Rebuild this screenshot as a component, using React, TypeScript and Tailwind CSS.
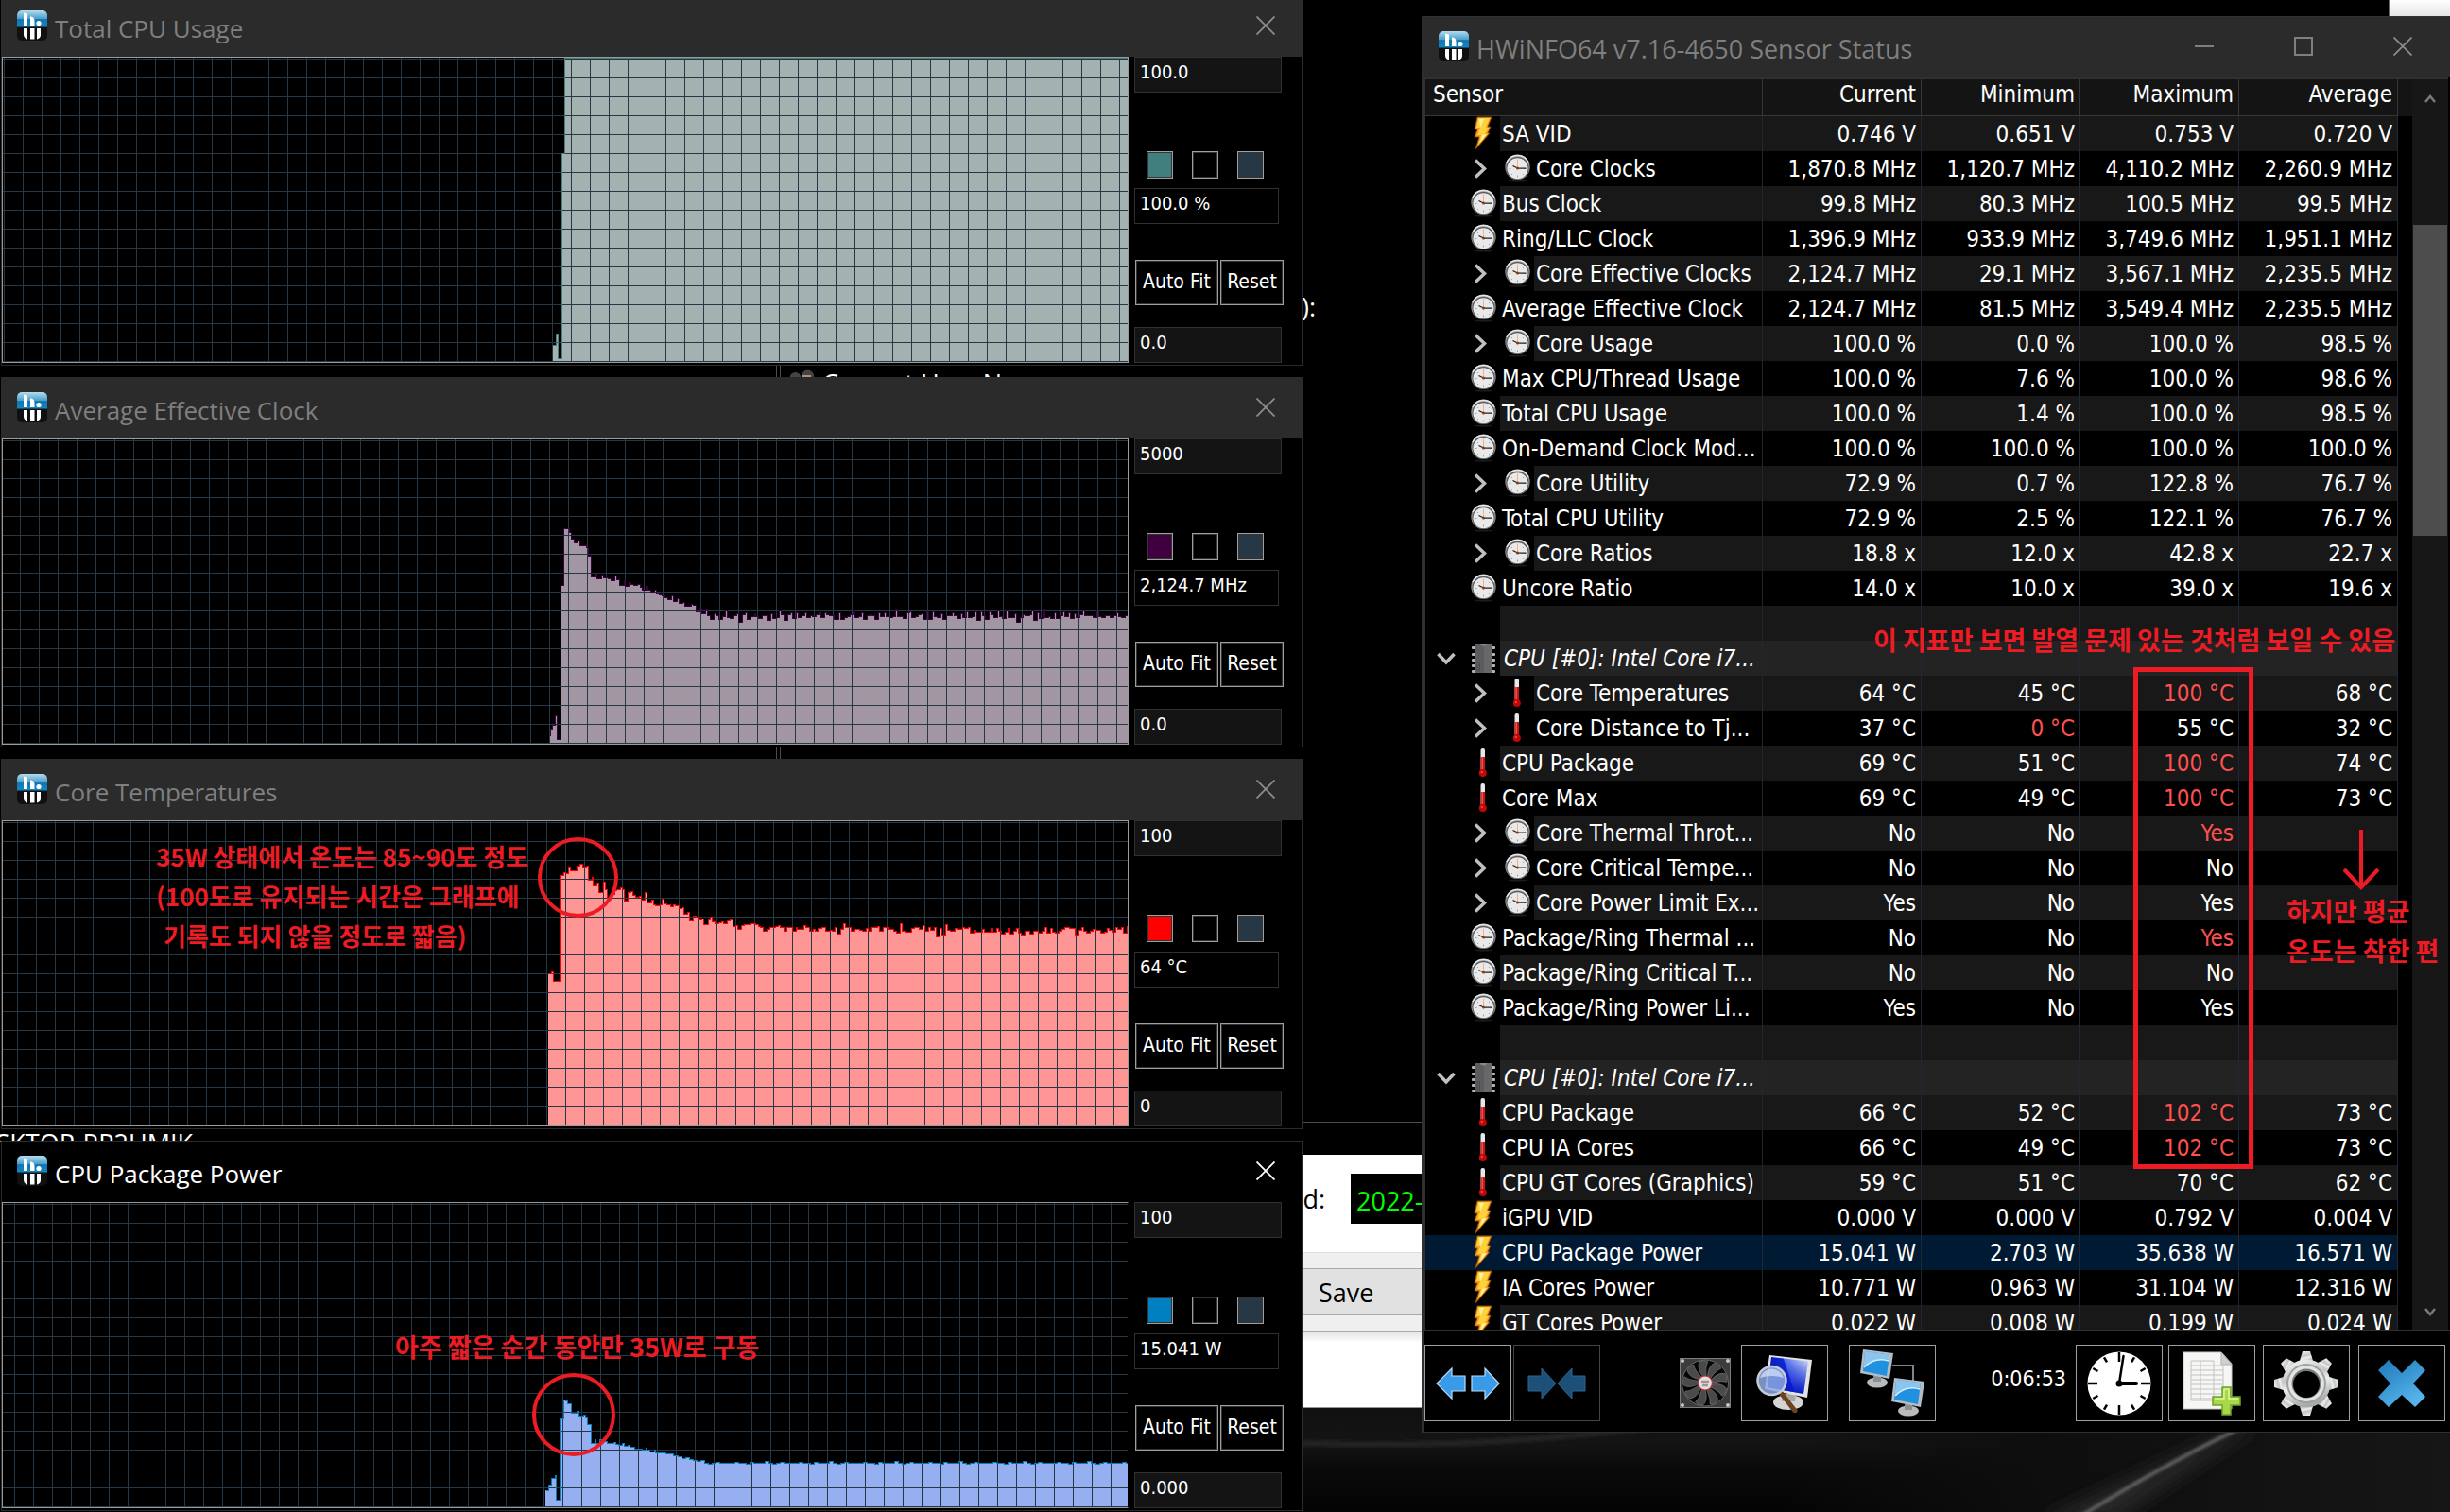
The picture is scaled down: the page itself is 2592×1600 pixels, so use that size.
import React from "react";

const UI = "font-['DejaVu_Sans_Condensed','DejaVu_Sans',sans-serif]";
const TITLE = "font-['Open_Sans','Noto_Sans',sans-serif]";
const NOTE = "font-['Noto_Sans_CJK_KR',sans-serif] font-bold text-[#ed1c24]";

/* ---------- chart data: flat lists of (end of step, level) pairs ---------- */

type Series = { ox: number; oy: number; kx: number; start: number; steps: number[] };

const usage: Series = {
  ox: 0, oy: 61, kx: 2.24, start: 1308,
  steps: [1316, 1094, 1321, 1060, 1330, 1138, 1337, 485, 2673, 184],
};

const effectiveClock: Series = {
  ox: 560, oy: -75, kx: 2.45, start: 51,
  steps: [
    53, 715, 60, 694, 67, 682, 72, 652, 82, 727, 89, 238, 102, 58, 109, 70, 116, 91, 126, 103, 131, 97, 146, 112, 153, 118, 160, 145,
    171, 211, 175, 200, 185, 217, 190, 205, 204, 214, 211, 217, 221, 223, 226, 208, 233, 220, 244, 236, 248, 223, 258, 241, 263, 229,
    270, 235, 280, 238, 286, 235, 292, 244, 302, 253, 307, 241, 314, 253, 324, 259, 329, 253, 336, 265, 343, 268, 350, 271, 358, 277,
    368, 283, 373, 271, 383, 289, 388, 280, 398, 295, 402, 292, 419, 304, 424, 298, 431, 301, 442, 322, 446, 310, 456, 328, 461, 313,
    468, 334, 478, 346, 483, 328, 490, 334, 500, 346, 507, 337, 512, 319, 519, 340, 529, 343, 537, 334, 542, 328, 552, 355, 559, 331,
    564, 325, 574, 346, 582, 337, 586, 328, 593, 337, 603, 343, 615, 334, 625, 349, 630, 328, 640, 343, 647, 340, 651, 319, 659, 331,
    669, 349, 676, 331, 681, 325, 691, 343, 696, 325, 706, 340, 713, 334, 718, 325, 728, 340, 733, 334, 742, 337, 749, 331, 754, 325,
    765, 340, 770, 325, 777, 331, 790, 334, 802, 346, 806, 325, 816, 346, 823, 340, 831, 337, 838, 331, 843, 317, 853, 340, 860, 337,
    865, 325, 875, 346, 882, 334, 887, 329, 894, 334, 904, 346, 909, 325, 919, 337, 924, 325, 931, 337, 941, 340, 948, 337, 953, 313,
    968, 337, 978, 343, 985, 325, 990, 322, 1000, 340, 1007, 337, 1014, 331, 1019, 328, 1030, 346, 1034, 322, 1044, 346, 1049, 322,
    1056, 337, 1066, 340, 1071, 328, 1081, 346, 1096, 334, 1100, 325, 1107, 334, 1118, 343, 1122, 328, 1132, 340, 1137, 322, 1147, 340,
    1154, 337, 1159, 322, 1169, 349, 1174, 322, 1181, 334, 1191, 346, 1196, 322, 1203, 331, 1213, 340, 1218, 316, 1225, 337, 1235, 343,
    1240, 319, 1257, 340, 1262, 328, 1272, 355, 1279, 340, 1284, 331, 1296, 334, 1301, 331, 1306, 319, 1316, 349, 1321, 325, 1331, 343,
    1336, 313, 1346, 340, 1350, 337, 1360, 343, 1365, 325, 1375, 343, 1382, 334, 1387, 322, 1397, 337, 1401, 325, 1412, 343, 1416, 328,
    1426, 340, 1434, 331, 1439, 316, 1460, 334, 1470, 340, 1475, 316, 1482, 337, 1492, 340, 1504, 334, 1514, 340, 1522, 334, 1527, 325,
    1534, 337, 1544, 340, 1551, 334,
  ],
};

const temperatures: Series = {
  ox: 560, oy: -1, kx: 2.45, start: 50,
  steps: [
    56, 481, 62, 475, 79, 505, 87, 169, 92, 160, 101, 163, 106, 142, 123, 154, 131, 139, 136, 133, 146, 142, 151, 139, 161, 184, 165, 175,
    175, 202, 180, 193, 190, 223, 195, 190, 202, 214, 212, 240, 220, 228, 226, 217, 234, 214, 239, 208, 246, 214, 256, 250, 263, 223,
    268, 220, 275, 232, 285, 238, 290, 235, 300, 247, 305, 223, 315, 256, 320, 247, 326, 262, 337, 265, 344, 262, 349, 244, 356, 259,
    364, 262, 373, 268, 378, 262, 386, 265, 395, 274, 400, 271, 410, 292, 415, 286, 425, 313, 430, 298, 437, 301, 447, 310, 452, 307,
    462, 325, 469, 310, 474, 301, 481, 316, 491, 322, 498, 319, 503, 316, 513, 322, 520, 313, 526, 310, 535, 331, 540, 328, 550, 340,
    557, 328, 572, 325, 586, 322, 592, 325, 599, 331, 606, 334, 616, 346, 623, 340, 638, 334, 645, 331, 650, 328, 658, 334, 667, 346,
    680, 334, 690, 346, 694, 334, 711, 340, 716, 328, 724, 334, 734, 346, 739, 340, 748, 346, 756, 337, 768, 334, 778, 346, 783, 343,
    792, 346, 797, 334, 807, 355, 814, 340, 819, 322, 834, 334, 843, 346, 855, 340, 863, 343, 873, 346, 878, 337, 888, 346, 902, 334,
    907, 331, 917, 346, 929, 334, 944, 340, 951, 346, 961, 352, 966, 322, 973, 346, 990, 349, 997, 337, 1009, 334, 1020, 340, 1025, 328,
    1034, 346, 1039, 334, 1049, 343, 1054, 334, 1064, 364, 1069, 337, 1079, 358, 1083, 325, 1090, 343, 1102, 346, 1107, 337, 1122, 340,
    1127, 334, 1137, 337, 1142, 334, 1152, 352, 1157, 343, 1174, 349, 1179, 340, 1196, 349, 1201, 337, 1211, 349, 1216, 337, 1223, 346,
    1233, 355, 1240, 349, 1245, 337, 1255, 355, 1262, 346, 1267, 337, 1275, 352, 1285, 358, 1297, 346, 1307, 355, 1319, 346, 1329, 352,
    1336, 346, 1341, 334, 1350, 352, 1355, 337, 1363, 349, 1373, 352, 1380, 346, 1387, 340, 1400, 334, 1414, 337, 1424, 358, 1431, 343,
    1436, 334, 1443, 346, 1453, 352, 1460, 346, 1466, 340, 1480, 343, 1490, 352, 1497, 349, 1502, 337, 1509, 343, 1519, 349, 1524, 334,
    1534, 340, 1539, 334, 1548, 352, 1551, 331,
  ],
};

const powerTail = (): number[] => {
  const out: number[] = [];
  const wobble = [0, 0, -4, 1, 0, 2, -3, 0, 0, 1, -5, 0, 4, 0, -3, 1, 0];
  let i = 0;
  for (let x = 1578; x <= 2673; x += 9, i++) {
    const base = x < 1680 ? 1072 + ((x - 1578) / 102) * 32 : 1104;
    out.push(x, Math.round(base + wobble[i % wobble.length]));
  }
  out.push(2673, 1104);
  return out;
};

const power: Series = {
  ox: 0, oy: -1180 + 1273, kx: 2.24, start: 1292,
  steps: [
    1300, 1192, 1307, 1174, 1314, 1153, 1318, 1144, 1327, 1222, 1334, 964, 1339, 904, 1345, 907, 1352, 916, 1367, 944, 1372, 940,
    1381, 955, 1386, 952, 1392, 961, 1399, 982, 1408, 1040, 1412, 1030, 1421, 1040, 1426, 1030, 1439, 1036, 1454, 1042, 1459, 1037,
    1466, 1045, 1475, 1048, 1479, 1042, 1488, 1051, 1492, 1047, 1504, 1052, 1520, 1058, 1529, 1062, 1533, 1057, 1539, 1063,
    1549, 1069, 1553, 1061, 1568, 1070, ...powerTail(),
  ],
};

type Monitor = {
  title: string; active?: boolean; high: string; low: string; value: string;
  line: string; fill: string; swatch: string; gridX: number; series: Series;
};

const monitors: Monitor[] = [
  { title: "Total CPU Usage", high: "100.0", low: "0.0", value: "100.0 %", line: "#417f7f", fill: "#a4b1b1", swatch: "bg-[#417f7f]", gridX: 4, series: usage },
  { title: "Average Effective Clock", high: "5000", low: "0.0", value: "2,124.7 MHz", line: "#400040", fill: "#a396a3", swatch: "bg-[#400040]", gridX: 1, series: effectiveClock },
  { title: "Core Temperatures", high: "100", low: "0", value: "64 °C", line: "#ff0000", fill: "#ff9696", swatch: "bg-[#ff0000]", gridX: 18, series: temperatures },
  { title: "CPU Package Power", active: true, high: "100", low: "0.000", value: "15.041 W", line: "#0080c0", fill: "#96aff0", swatch: "bg-[#0080c0]", gridX: 15, series: power },
];

/* ---------- icons ---------- */

function AppIcon({ id }: { id: string }) {
  return (
    <svg viewBox="0 0 32 32" className="size-8 shrink-0" aria-hidden="true">
      <defs>
        <linearGradient id={id} x1="0" y1="0" x2="0" y2="1">
          <stop offset="0" stopColor="#b4dcee" />
          <stop offset="0.500" stopColor="#4a9fcb" />
          <stop offset="0.550" stopColor="#0d76b4" />
          <stop offset="1" stopColor="#1686c2" />
        </linearGradient>
      </defs>
      <rect width="32" height="32" rx="5" fill="#101010" />
      <path d="M0 17.500V5a5 5 0 0 1 5-5h22a5 5 0 0 1 5 5v12.500z" fill={`url(#${id})`} />
      <path d="M7 2.500l4 1V16H7zM14 6.500c3 0 4.500 2 4.500 4.500v5H14z" fill="#fff" />
      <circle cx="23" cy="13.500" r="2.600" fill="#fff" />
      <path d="M7 19h4v11.500c-3-1-4-2.500-4-5zM14 19h4.500v11.500H14zM21 19h4v7c0 2.500-1 3.500-4 4.500z" fill="#fff" />
    </svg>
  );
}

function CloseGlyph({ color }: { color: string }) {
  return (
    <svg viewBox="0 0 20 20" className="size-5" aria-hidden="true">
      <path d="M0.500 0.500l19 19M19.500 0.500l-19 19" stroke={color} strokeWidth="1.800" />
    </svg>
  );
}

function RowIcon({ kind }: { kind: string }) {
  if (kind === "bolt")
    return (
      <svg viewBox="0 0 27 37" className="h-[37px] w-[27px] shrink-0" aria-hidden="true">
        <path d="M7 1H22L18 11H21L18 18H20L5 35L9 22H4L7 14H4z" fill="#f79a1e" stroke="#8a4a0c" strokeWidth="1" />
        <path d="M8 2H20L16 12H19L15 19H17L8 30L11 20H7L10 12H6z" fill="#ffd23c" />
        <path d="M9 3h5l-4 9zM12 20l5-1-7 9z" fill="#fff3a0" />
      </svg>
    );
  if (kind === "temp")
    return (
      <svg viewBox="0 0 27 37" className="h-[37px] w-[27px] shrink-0" aria-hidden="true">
        <rect x="10.500" y="3" width="4.500" height="24" rx="2" fill="#e8e8e8" />
        <rect x="10.500" y="12" width="4.500" height="16" fill="#c81414" />
        <rect x="11.500" y="12" width="1.500" height="14" fill="#ee5050" />
        <circle cx="12.800" cy="29" r="4" fill="#c00808" />
        <circle cx="11.800" cy="28" r="1.200" fill="#f04040" />
      </svg>
    );
  if (kind === "chip")
    return (
      <svg viewBox="0 0 27 37" className="h-[37px] w-[27px] shrink-0" aria-hidden="true">
        {[6, 13, 19, 25, 31].map((y) => (
          <rect key={y} x="1" y={y} width="25" height="3" rx="1" fill="#b4b4b4" />
        ))}
        <rect x="4" y="3" width="19" height="31" rx="1" fill="#5c5c5e" />
        <rect x="14" y="3" width="9" height="31" fill="#68686a" />
        <path d="M10 3h7a3.500 2.500 0 0 1-7 0z" fill="#8a8a8c" />
        <path d="M7 22v10M9.500 22v10" stroke="#4a4a4c" />
      </svg>
    );
  return (
    <svg viewBox="0 0 27 37" className="h-[37px] w-[27px] shrink-0" aria-hidden="true">
      <ellipse cx="13.500" cy="31.500" rx="10" ry="1" fill="#1c1c1c" />
      <circle cx="13.500" cy="16.800" r="13.200" fill="#8e9092" />
      <path d="M2 12a12.500 12.500 0 0 1 23 0" fill="none" stroke="#e8e8e8" strokeWidth="1.500" />
      <circle cx="13.500" cy="18" r="12" fill="#55585a" />
      <circle cx="13.500" cy="18.300" r="11" fill="#e9e9e9" />
      <path d="M13.500 10v2M13.500 25.500v2M4.500 18.500h2M20.500 18.500h2M7 12l1 1M20 12l-1 1M7 25l1-1M20 25l-1-1" stroke="#a0a0a0" />
      <path d="M13.500 18V8.500" stroke="#f4b080" />
      <path d="M13.500 18L8.500 15.500M13.500 18.200h9" stroke="#222" strokeWidth="1.300" />
      <circle cx="13.500" cy="18" r="1.500" fill="#8a3c10" />
    </svg>
  );
}

function Chevron({ down }: { down?: boolean }) {
  return down ? (
    <svg viewBox="0 0 20 14" className="h-[14px] w-5" aria-hidden="true">
      <path d="M1.500 2l8.500 9 8.500-9" fill="none" stroke="#c0c0c0" strokeWidth="3.500" />
    </svg>
  ) : (
    <svg viewBox="0 0 14 21" className="h-[21px] w-[14px]" aria-hidden="true">
      <path d="M2 1.500l9.500 9-9.500 9" fill="none" stroke="#c0c0c0" strokeWidth="3.500" />
    </svg>
  );
}

function ArrowsOut() {
  return (
    <svg viewBox="0 0 68 36" className="h-9 w-[68px]" aria-hidden="true">
      <path d="M1 18L17 2v8h14v16H17v8z" fill="#3a9aea" stroke="#b9dcf4" strokeWidth="1.200" />
      <path d="M67 18L52 2v8H38v16h14v8z" fill="#3a9aea" stroke="#b9dcf4" strokeWidth="1.200" />
    </svg>
  );
}

function ArrowsIn() {
  return (
    <svg viewBox="0 0 62 36" className="h-9 w-[62px]" aria-hidden="true">
      <path d="M30 18L15 2v8H1v16h14v8zM32 18L47 2v8h14v16H47v8z" fill="#1d5078" stroke="#2c648e" />
    </svg>
  );
}

function FanIcon() {
  const blades = [0, 40, 80, 120, 160, 200, 240, 280, 320];
  return (
    <svg viewBox="0 0 54 53" className="h-[53px] w-[54px] shrink-0" role="img" aria-label="Fan">
      <rect x="0.500" y="0.500" width="53" height="52" fill="#3c3c3c" stroke="#7c7c7c" />
      {[[3, 3], [51, 3], [3, 50], [51, 50]].map(([x, y]) => (
        <circle key={`${x}-${y}`} cx={x} cy={y} r="2" fill="#c8c8c8" />
      ))}
      <circle cx="27" cy="26.500" r="24.500" fill="#060606" stroke="#6a6a6a" />
      {blades.map((a) => (
        <path key={a} d="M25 20C20 14 19 8 21 4c4-2 8-1 9 0c-3 5-2 11-2 16z" fill="#4a4a4a" stroke="#7c7c7c" strokeWidth="0.600" transform={`rotate(${a} 27 26.500)`} />
      ))}
      <circle cx="27" cy="26.500" r="7.500" fill="#e2dede" stroke="#c03038" strokeWidth="1.200" />
      <path d="M23 25h8M24 29h6" stroke="#9c9497" strokeWidth="2.500" />
    </svg>
  );
}

function MonitorSearch() {
  return (
    <svg viewBox="0 0 60 62" className="h-[62px] w-[60px]" aria-hidden="true">
      <defs>
        <linearGradient id="scr" x1="0" y1="0.300" x2="1" y2="0">
          <stop offset="0" stopColor="#0818b8" />
          <stop offset="0.420" stopColor="#1028d0" />
          <stop offset="0.440" stopColor="#5a78ec" />
          <stop offset="1" stopColor="#eaf0ff" />
        </linearGradient>
        <linearGradient id="scr2" x1="0" y1="0" x2="0" y2="1">
          <stop offset="0" stopColor="#1028d0" stopOpacity="0" />
          <stop offset="1" stopColor="#0818c8" />
        </linearGradient>
      </defs>
      <ellipse cx="34" cy="51" rx="16" ry="8" fill="#d4d4d4" />
      <path d="M28 42h14l-1 8H27z" fill="#a8a8a8" />
      <path d="M14 1L59 6 54 46 9 37z" fill="#e4e4e4" />
      <path d="M16 3L55 7.500 50 42 12 35z" fill="url(#scr)" />
      <path d="M16 3L55 7.500 50 42 12 35z" fill="url(#scr2)" />
      <path d="M27 42l14 18" stroke="#6e421e" strokeWidth="5" strokeLinecap="round" />
      <circle cx="16.500" cy="28" r="15" fill="#8ea8e0" fillOpacity="0.850" stroke="#c4ccd8" strokeWidth="2.500" />
      <path d="M4 25a13 13 0 0 1 25 0q-12-4-25 0z" fill="#d8e4f8" fillOpacity="0.700" />
    </svg>
  );
}

function NetworkIcon() {
  const screen = (
    <>
      <ellipse cx="18" cy="35" rx="11" ry="5.500" fill="#b8babc" />
      <path d="M14 28h8v6h-8z" fill="#8c8e90" />
      <path d="M3 0L35 4 31 31 0 25z" fill="#b4bcc4" />
      <path d="M5 2L31 5.500 28 28 3 23z" fill="#2090e0" />
      <path d="M5 2L31 5.500 30 11C20 8 10 12 3.500 19z" fill="#8cc4f0" />
      <path d="M4 19C12 11 20 9 30 12" fill="none" stroke="#d8eefc" strokeWidth="1.500" />
    </>
  );
  return (
    <svg viewBox="0 0 69 71" className="h-[71px] w-[69px]" aria-hidden="true">
      <path d="M34 17h22v16" fill="none" stroke="#7c8690" strokeWidth="2" />
      <g>{screen}</g>
      <g transform="translate(33 30)">{screen}</g>
    </svg>
  );
}

function BigClock() {
  return (
    <svg viewBox="0 0 68 68" className="size-[68px]" aria-hidden="true">
      <circle cx="34" cy="34" r="33.500" fill="#fff" />
      {[0, 30, 60, 90, 120, 150, 180, 210, 240, 270, 300, 330].map((a) => (
        <path key={a} d={a % 90 === 0 ? "M34 1v10" : "M34 2v6"} stroke="#000" strokeWidth="2.500" transform={`rotate(${a} 34 34)`} />
      ))}
      <path d="M34 34L38.500 5" stroke="#000" strokeWidth="2.500" strokeLinecap="round" />
      <path d="M34 34h18" stroke="#000" strokeWidth="4" strokeLinecap="round" />
      <circle cx="34" cy="34" r="3.500" />
    </svg>
  );
}

function SheetAdd() {
  return (
    <svg viewBox="0 0 62 68" className="h-[68px] w-[62px]" aria-hidden="true">
      <path d="M1 1h40l11 12v48H1z" fill="#f6f6f4" stroke="#c4c4c0" />
      <path d="M41 1v13h11z" fill="#d0d0ce" stroke="#b0b0ae" />
      {[10, 15, 20, 25, 30, 35, 40, 45, 50].map((y) => (
        <path key={y} d={`M9 ${y}h${y < 15 ? 24 : 34}`} stroke="#c2c4c0" />
      ))}
      <path d="M9 10v42M19 10v42M33 10v42M43 15v37M9 52h34" stroke="#c2c4c0" />
      <path d="M42 38h9v10h10v9H51v10h-9V57H32v-9h10z" fill="#a8d848" stroke="#6ea428" strokeWidth="1.500" />
      <path d="M44 40h5v10h10M34 50h10V40" fill="none" stroke="#dcf4a0" strokeWidth="1.500" />
    </svg>
  );
}

function GearIcon() {
  return (
    <svg viewBox="0 0 70 70" className="size-[70px]" aria-hidden="true">
      <defs>
        <linearGradient id="gear" x1="0" y1="0" x2="0.300" y2="1">
          <stop offset="0" stopColor="#fafafa" />
          <stop offset="0.450" stopColor="#c4c6c6" />
          <stop offset="0.600" stopColor="#eeeeee" />
          <stop offset="1" stopColor="#a8aaaa" />
        </linearGradient>
      </defs>
      {[0, 45, 90, 135, 180, 225, 270, 315].map((a) => (
        <path key={a} d="M27 14L31 1h8l4 13z" fill="url(#gear)" transform={`rotate(${a} 35 35)`} />
      ))}
      <circle cx="35" cy="35" r="25.500" fill="url(#gear)" />
      <circle cx="35" cy="35" r="21" fill="#9fa1a1" />
      <circle cx="35" cy="35" r="19" fill="#e2e3e3" />
      <circle cx="35" cy="35" r="15.500" fill="#77797a" />
      <circle cx="35" cy="36" r="14" fill="#000" />
    </svg>
  );
}

function ExitIcon() {
  return (
    <svg viewBox="0 0 52 52" className="size-[52px]" aria-hidden="true">
      <defs>
        <linearGradient id="exit" x1="0" y1="0" x2="0.600" y2="1">
          <stop offset="0" stopColor="#1c78b8" />
          <stop offset="1" stopColor="#58b4ec" />
        </linearGradient>
      </defs>
      <path d="M12 1L26 15 40 1 51 12 38 26 51 40 40 51 26 38 12 51 1 40 14 26 1 12z" fill="url(#exit)" />
    </svg>
  );
}

/* ---------- graph windows ---------- */

function outline(s: Series) {
  const px = (x: number) => Math.round(x / s.kx) + s.ox - 3;
  const py = (y: number) => Math.round(y / 3) - s.oy;
  let d = `M${px(s.start)} ${py(s.steps[1])}`;
  for (let i = 0; i < s.steps.length; i += 2) d += `V${py(s.steps[i + 1])}H${px(s.steps[i])}`;
  return d;
}

function Plot({ m }: { m: Monitor }) {
  const rows = Array.from({ length: 17 }, (_, i) => 1 + i * 20);
  const cols = Array.from({ length: 60 }, (_, i) => m.gridX + i * 20 - 3).filter((x) => x >= 0);
  const d = outline(m.series);
  const x0 = Math.round(m.series.start / m.series.kx) + m.series.ox - 3;
  return (
    <svg viewBox="0 0 1190 322" preserveAspectRatio="none" className="h-full w-full" shapeRendering="crispEdges" role="img" aria-label={`${m.title} graph`}>
      <path d={`${d}V322H${x0}z`} fill={m.fill} />
      <path
        d={rows.map((y) => `M0 ${y}h1190v1H0z`).join("") + cols.map((x) => `M${x} 0h1v322h-1z`).join("")}
        fill="#263745"
      />
      <path d={d} fill="none" stroke={m.line} strokeWidth="1" transform="translate(0.500 0.500)" />
    </svg>
  );
}

function Swatch({ color, label }: { color: string; label: string }) {
  return (
    <button type="button" aria-label={label} className={`h-[29px] w-7 border border-[#9f9f9f] ring-1 ring-[#333] ring-inset ${color}`} />
  );
}

function GraphWindow({ m, index }: { m: Monitor; index: number }) {
  const field = `${UI} block h-[38px] border border-[#303030] pb-[6px] pl-[5px] text-[20px] text-white outline-none`;
  return (
    <section className="flex flex-col border border-[#2b2b2b] bg-black">
      <header className={`flex h-16 items-center pb-0.5 pl-4 ${m.active ? "bg-black text-white" : "bg-[#2b2b2b] text-[#7f7f7f]"}`}>
        <AppIcon id={`app-${index}`} />
        <h2 className={`${TITLE} pt-[5px] pl-2 text-[26px] leading-8`}>{m.title}</h2>
        <button type="button" aria-label={`Close ${m.title}`} className="mr-7 ml-auto">
          <CloseGlyph color={m.active ? "#ffffff" : "#8c8c8c"} />
        </button>
      </header>
      <div className="flex pb-0.5">
        <div className={`h-[324px] min-w-0 flex-1 border border-[#9a9c9c] ${m.active ? "border-r-black" : ""}`}>
          <Plot m={m} />
        </div>
        <div className="w-[183px] shrink-0 pl-1.5">
          <input readOnly aria-label="Maximum" value={m.high} className={`${field} w-[156px] bg-[#141414]`} />
          <div className="mt-[62px] flex gap-5 pl-[13px]">
            <Swatch color={m.swatch} label="Line colour" />
            <Swatch color="bg-black" label="Background colour" />
            <Swatch color="bg-[#263745]" label="Grid colour" />
          </div>
          <input readOnly aria-label="Current" value={m.value} className={`${field} mt-[10px] w-[153px] bg-black`} />
          <div className={`${UI} mt-[38px] flex gap-0.5 pl-px text-[21px] text-white`}>
            <button type="button" className="h-12 w-[88px] border border-[#9f9f9f] whitespace-nowrap ring-1 ring-[#333] ring-inset">Auto Fit</button>
            <button type="button" className="h-12 w-[67px] border border-[#9f9f9f] ring-1 ring-[#333] ring-inset">Reset</button>
          </div>
          <input readOnly aria-label="Minimum" value={m.low} className={`${field} mt-[23px] w-[156px] bg-[#141414]`} />
        </div>
      </div>
    </section>
  );
}

/* ---------- sensor window ---------- */

type Row = { kind: "clock" | "bolt" | "temp" | "chip" | "blank"; name: string; v: string[]; sub?: boolean; selected?: boolean };

const rows: Row[] = [
  { kind: "bolt", name: "SA VID", v: ["0.746 V", "0.651 V", "0.753 V", "0.720 V"] },
  { kind: "clock", sub: true, name: "Core Clocks", v: ["1,870.8 MHz", "1,120.7 MHz", "4,110.2 MHz", "2,260.9 MHz"] },
  { kind: "clock", name: "Bus Clock", v: ["99.8 MHz", "80.3 MHz", "100.5 MHz", "99.5 MHz"] },
  { kind: "clock", name: "Ring/LLC Clock", v: ["1,396.9 MHz", "933.9 MHz", "3,749.6 MHz", "1,951.1 MHz"] },
  { kind: "clock", sub: true, name: "Core Effective Clocks", v: ["2,124.7 MHz", "29.1 MHz", "3,567.1 MHz", "2,235.5 MHz"] },
  { kind: "clock", name: "Average Effective Clock", v: ["2,124.7 MHz", "81.5 MHz", "3,549.4 MHz", "2,235.5 MHz"] },
  { kind: "clock", sub: true, name: "Core Usage", v: ["100.0 %", "0.0 %", "100.0 %", "98.5 %"] },
  { kind: "clock", name: "Max CPU/Thread Usage", v: ["100.0 %", "7.6 %", "100.0 %", "98.6 %"] },
  { kind: "clock", name: "Total CPU Usage", v: ["100.0 %", "1.4 %", "100.0 %", "98.5 %"] },
  { kind: "clock", name: "On-Demand Clock Mod...", v: ["100.0 %", "100.0 %", "100.0 %", "100.0 %"] },
  { kind: "clock", sub: true, name: "Core Utility", v: ["72.9 %", "0.7 %", "122.8 %", "76.7 %"] },
  { kind: "clock", name: "Total CPU Utility", v: ["72.9 %", "2.5 %", "122.1 %", "76.7 %"] },
  { kind: "clock", sub: true, name: "Core Ratios", v: ["18.8 x", "12.0 x", "42.8 x", "22.7 x"] },
  { kind: "clock", name: "Uncore Ratio", v: ["14.0 x", "10.0 x", "39.0 x", "19.6 x"] },
  { kind: "blank", name: "", v: ["", "", "", ""] },
  { kind: "chip", name: "CPU [#0]: Intel Core i7...", v: ["", "", "", ""] },
  { kind: "temp", sub: true, name: "Core Temperatures", v: ["64 °C", "45 °C", "!100 °C", "68 °C"] },
  { kind: "temp", sub: true, name: "Core Distance to Tj...", v: ["37 °C", "!0 °C", "55 °C", "32 °C"] },
  { kind: "temp", name: "CPU Package", v: ["69 °C", "51 °C", "!100 °C", "74 °C"] },
  { kind: "temp", name: "Core Max", v: ["69 °C", "49 °C", "!100 °C", "73 °C"] },
  { kind: "clock", sub: true, name: "Core Thermal Throt...", v: ["No", "No", "!Yes", ""] },
  { kind: "clock", sub: true, name: "Core Critical Tempe...", v: ["No", "No", "No", ""] },
  { kind: "clock", sub: true, name: "Core Power Limit Ex...", v: ["Yes", "No", "Yes", ""] },
  { kind: "clock", name: "Package/Ring Thermal ...", v: ["No", "No", "!Yes", ""] },
  { kind: "clock", name: "Package/Ring Critical T...", v: ["No", "No", "No", ""] },
  { kind: "clock", name: "Package/Ring Power Li...", v: ["Yes", "No", "Yes", ""] },
  { kind: "blank", name: "", v: ["", "", "", ""] },
  { kind: "chip", name: "CPU [#0]: Intel Core i7...", v: ["", "", "", ""] },
  { kind: "temp", name: "CPU Package", v: ["66 °C", "52 °C", "!102 °C", "73 °C"] },
  { kind: "temp", name: "CPU IA Cores", v: ["66 °C", "49 °C", "!102 °C", "73 °C"] },
  { kind: "temp", name: "CPU GT Cores (Graphics)", v: ["59 °C", "51 °C", "70 °C", "62 °C"] },
  { kind: "bolt", name: "iGPU VID", v: ["0.000 V", "0.000 V", "0.792 V", "0.004 V"] },
  { kind: "bolt", selected: true, name: "CPU Package Power", v: ["15.041 W", "2.703 W", "35.638 W", "16.571 W"] },
  { kind: "bolt", name: "IA Cores Power", v: ["10.771 W", "0.963 W", "31.104 W", "12.316 W"] },
  { kind: "bolt", name: "GT Cores Power", v: ["0.022 W", "0.008 W", "0.199 W", "0.024 W"] },
];

function SensorRow({ row, index }: { row: Row; index: number }) {
  const bg = row.selected ? "bg-[#001a33]" : row.kind === "chip" ? "bg-[#232323]" : index % 2 === 0 ? "bg-[#181818]" : "bg-black";
  return (
    <tr className="h-[37px]">
      <td className="border-r border-[#1e2834] p-0">
        <div className={`flex h-[37px] items-center ${row.selected ? "bg-[#001a33]" : ""}`}>
          <span className={row.sub ? "flex w-[84px] shrink-0 pl-[51px]" : "flex w-12 shrink-0 pl-3"}>
            {row.sub && <Chevron />}
            {row.kind === "chip" && <Chevron down />}
          </span>
          <span className="w-[31px] shrink-0">{row.kind !== "blank" && <RowIcon kind={row.kind} />}</span>
          <span className={`h-full min-w-0 flex-1 overflow-hidden leading-[38px] whitespace-nowrap ${row.kind === "chip" ? "pl-1 italic" : "pl-0.5"} ${bg}`}>
            {row.name}
          </span>
        </div>
      </td>
      {row.v.map((t, i) => (
        <td key={i} className={`border-r border-[#1e2834] pt-px pr-[5px] pb-0 pl-0 text-right leading-9 whitespace-nowrap ${bg} ${t.startsWith("!") ? "text-[#ff5050]" : ""}`}>
          {t.replace("!", "")}
        </td>
      ))}
    </tr>
  );
}

function ToolButton({ label, dim, className = "", children }: { label: string; dim?: boolean; className?: string; children: React.ReactNode }) {
  return (
    <button
      type="button"
      aria-label={label}
      className={`flex h-[81px] w-[92px] shrink-0 items-center justify-center border ${dim ? "border-[#444]" : "border-[#9f9f9f]"} ${className}`}
    >
      {children}
    </button>
  );
}

function SensorWindow() {
  return (
    <section className="flex h-full flex-col border border-r-0 border-[#303030] bg-black">
      <header className="flex h-[64px] shrink-0 items-center bg-[#2b2b2b] pb-0.5 pl-[17px] text-[#7f7f7f]">
        <AppIcon id="app-main" />
        <h1 className={`${TITLE} pt-[5px] pl-2 text-[27px] leading-8`}>HWiNFO64 v7.16-4650 Sensor Status</h1>
        <div className="mr-[40px] ml-auto flex items-center gap-[85px]">
          <button type="button" aria-label="Minimize" className="flex h-5 w-5 items-center">
            <span className="h-0.5 w-5 bg-[#7f7f7f]" />
          </button>
          <button type="button" aria-label="Maximize" className="size-5 border-2 border-[#7f7f7f]" />
          <button type="button" aria-label="Close">
            <CloseGlyph color="#8c8c8c" />
          </button>
        </div>
      </header>
      <div className="flex min-h-0 flex-1 border-l-[3px] border-[#303030]">
        <div className="min-w-0 flex-1 overflow-hidden border-t-2 border-t-[#303030]">
          <table className={`${UI} w-full table-fixed border-separate border-spacing-0 text-[24px] text-white`}>
            <colgroup>
              <col />
              <col className="w-[168px]" />
              <col className="w-[168px]" />
              <col className="w-[168px]" />
              <col className="w-[168px]" />
            </colgroup>
            <thead>
              <tr className="h-[39px] bg-[#141414]">
                <th className="border-r border-b border-[#363636] p-0 pb-1.5 pl-2 text-left leading-8 font-normal">Sensor</th>
                {["Current", "Minimum", "Maximum", "Average"].map((h) => (
                  <th key={h} className="border-r border-b border-[#363636] p-0 pr-[5px] pb-1.5 text-right leading-8 font-normal">{h}</th>
                ))}
              </tr>
            </thead>
            <tbody>
              {rows.map((r, i) => (
                <SensorRow key={i} row={r} index={i} />
              ))}
            </tbody>
          </table>
        </div>
        <div className="w-[15px] shrink-0 border-t-2 border-[#303030]">
          <div className="h-[39px] bg-[#141414]" />
        </div>
        <div className="mr-0.5 flex w-[38px] shrink-0 flex-col items-center justify-between border-t-2 border-[#303030] bg-[#171717]">
          <svg viewBox="0 0 12 9" className="mt-[16px] h-[9px] w-3" aria-hidden="true"><path d="M1 8l5-6 5 6" fill="none" stroke="#7a7a7a" strokeWidth="2.500" /></svg>
          <div className="mt-[129px] h-[329px] w-9 bg-[#4d4d4d]" />
          <svg viewBox="0 0 12 9" className="mt-auto mb-[14px] h-[9px] w-3" aria-hidden="true"><path d="M1 1l5 6 5-6" fill="none" stroke="#7a7a7a" strokeWidth="2.500" /></svg>
        </div>
      </div>
      <footer className="flex h-[108px] shrink-0 items-center border-t border-l-2 border-[#303030] pt-1">
        <ToolButton label="Expand all"><ArrowsOut /></ToolButton>
        <ToolButton label="Shrink all" dim className="ml-0.5"><ArrowsIn /></ToolButton>
        <div className="ml-[84px]"><FanIcon /></div>
        <ToolButton label="System summary" className="ml-[11px]"><MonitorSearch /></ToolButton>
        <ToolButton label="Network" className="ml-[22px]"><NetworkIcon /></ToolButton>
        <time className={`${UI} ml-auto pr-[10px] pb-2 text-[23px] text-white`}>0:06:53</time>
        <ToolButton label="Reset clock"><BigClock /></ToolButton>
        <ToolButton label="Start logging" className="ml-1.5"><SheetAdd /></ToolButton>
        <ToolButton label="Settings" className="ml-2"><GearIcon /></ToolButton>
        <ToolButton label="Exit" className="mr-[5px] ml-[9px]"><ExitIcon /></ToolButton>
      </footer>
    </section>
  );
}

/* ---------- desktop behind the windows ---------- */

function Backdrop() {
  return (
    <div className={`${TITLE} absolute inset-0 overflow-hidden bg-black text-[27px] leading-8 whitespace-nowrap text-white`}>
      <svg viewBox="0 0 1216 110" preserveAspectRatio="none" className="absolute right-0 bottom-0 h-[110px] w-[1216px]" aria-hidden="true">
        <defs>
          <linearGradient id="wall" x1="0" y1="0" x2="0" y2="1">
            <stop offset="0" stopColor="#101010" />
            <stop offset="0.330" stopColor="#141414" />
            <stop offset="0.600" stopColor="#090909" />
            <stop offset="1" stopColor="#040404" />
          </linearGradient>
          <linearGradient id="wall-right" x1="0" y1="0" x2="1" y2="0">
            <stop offset="0" stopColor="#0e0e0e" stopOpacity="0" />
            <stop offset="0.400" stopColor="#0e0e0e" />
            <stop offset="1" stopColor="#161616" />
          </linearGradient>
          <filter id="soft"><feGaussianBlur stdDeviation="9" /></filter>
          <filter id="fine"><feGaussianBlur stdDeviation="1.500" /></filter>
        </defs>
        <rect width="1216" height="110" fill="url(#wall)" />
        <rect x="500" width="716" height="110" fill="url(#wall-right)" />
        <path d="M0 37q150 6 300-9t240-20" fill="none" stroke="#242424" strokeWidth="6" filter="url(#fine)" />
        <path d="M1000 16L780 120H860L1010 20z" fill="#282828" filter="url(#soft)" />
        <path d="M1010 14Q930 50 826 114" fill="none" stroke="#606060" strokeWidth="4" filter="url(#fine)" />
      </svg>
      <div className="absolute top-[387px] left-[821px] h-[420px] w-[5px] border-x border-[#4c4c4c]" />
      <svg viewBox="0 0 26 26" className="absolute top-[390px] left-[835px] size-[26px]" aria-hidden="true">
        <circle cx="6.500" cy="10" r="6" fill="#444" /><path d="M1 9h10v9H1z" fill="#d0a880" />
        <circle cx="19.500" cy="8" r="6.500" fill="#444" /><path d="M14 7h9v10h-9z" fill="#b09070" />
      </svg>
      <p className="absolute top-[390px] left-[870px] h-3 overflow-hidden">Current User Name</p>
      <p className="absolute top-[309px] left-[1377px]">):</p>
      <p className="absolute top-[1194px] right-[2388px] h-3.5 overflow-hidden">DESKTOP-RP2UMIK</p>
      <div className="absolute top-[1187px] left-[1377px] h-px w-[130px] bg-[#4c4c4c]" />
      <div className="absolute top-0 right-0 h-[17px] w-[65px] border-l border-[#666] bg-linear-to-b from-white to-[#e4e4e4]" />
      <div className="absolute top-[1222px] left-[1370px] flex w-[140px] flex-col bg-white text-black">
        <div className="flex h-[103px] items-center pb-[10px]">
          <span className="flex w-[59px] shrink-0 justify-end pr-[27px]">ed:</span>
          <span className="h-[53px] flex-1 bg-black pl-1.5 leading-[57px] text-[#00ff00]">2022-</span>
        </div>
        <div className="border-y border-t-[#dcdcdc] border-b-[#aaa] bg-[#efefef] py-4">
          <button type="button" className="block h-[50px] w-[136px] border border-[#aaa] bg-[#e1e1e1] pt-0.5 pl-[24px] text-left">Save</button>
        </div>
        <div className="h-[81px] border-b border-[#8a96a0] bg-linear-to-b from-[#e4e4e4] via-white via-15% to-white" />
      </div>
    </div>
  );
}

/* ---------- red notes drawn over the windows ---------- */

function Notes() {
  return (
    <div className={`${NOTE} pointer-events-none absolute inset-0 overflow-hidden text-[27px] leading-[42px] whitespace-nowrap`}>
      <p className="absolute top-[885px] left-[165px] text-[26px]">
        35W 상태에서 온도는 85~90도 정도<br />(100도로 유지되는 시간은 그래프에
        <span className="block pl-2">기록도 되지 않을 정도로 짧음)</span>
      </p>
      <p className="absolute top-[1404px] left-[418px]">아주 짧은 순간 동안만 35W로 구동</p>
      <p className="absolute top-[656px] right-[58px]">이 지표만 보면 발열 문제 있는 것처럼 보일 수 있음</p>
      <p className="absolute top-[943px] left-[2419px]">하지만 평균<br />온도는 착한 편</p>
      <div className="absolute top-[886px] left-[569px] size-[85px] rounded-full border-4 border-[#ed1c24]" />
      <div className="absolute top-[1453px] left-[563px] size-[88px] rounded-full border-4 border-[#ed1c24]" />
      <div className="absolute top-[706px] right-[208px] h-[531px] w-[127px] border-[5px] border-[#ed1c24]" />
      <svg viewBox="0 0 40 64" className="absolute top-[878px] left-[2478px] h-16 w-10" aria-hidden="true">
        <path d="M20 0v60M2 42l18 19 18-19" fill="none" stroke="#ed1c24" strokeWidth="4" />
      </svg>
    </div>
  );
}

export default function App() {
  return (
    <main className="relative h-screen overflow-hidden bg-black">
      <Backdrop />
      <div className="relative grid h-full grid-cols-[1378fr_126fr_1088fr]">
        <div className="-mt-[5px] flex flex-col gap-3 pl-px">
          {monitors.map((m, i) => (
            <GraphWindow key={m.title} m={m} index={i} />
          ))}
        </div>
        <div />
        <div className="min-h-0 pt-[17px] pb-[84px]">
          <SensorWindow />
        </div>
      </div>
      <Notes />
    </main>
  );
}
